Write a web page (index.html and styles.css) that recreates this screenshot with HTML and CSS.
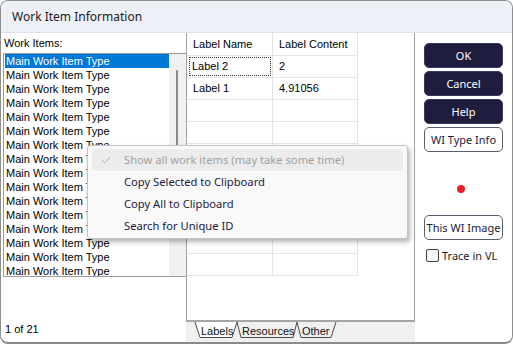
FILE: index.html
```html
<!DOCTYPE html>
<html lang="en">
<head>
    <meta charset="UTF-8">
    <title>Work Item Information</title>
    <link rel="stylesheet" href="styles.css">
</head>
<body>
    <div class="window">
        <div class="titlebar">Work Item Information</div>
        <div class="content">
            <div class="left-panel">
                <div class="list-label">Work Items:</div>
                <div class="listbox">
                    <div class="list-items" id="listItems"></div>
                    <div class="scrollbar"><div class="thumb"></div></div>
                </div>
                <div class="count">1 of 21</div>
            </div>

            <div class="middle-panel">
                <div class="grid-panel">
                    <div class="grid" id="grid">
                        <div class="cell head">Label Name</div>
                        <div class="cell head">Label Content</div>
                        <div class="cell"><span class="focus">Label 2</span></div>
                        <div class="cell">2</div>
                        <div class="cell">Label 1</div>
                        <div class="cell">4.91056</div>
                    </div>
                </div>
                <div class="tab-strip">
                    <svg width="228" height="22" viewBox="0 0 228 22">
                        <path d="M51 0 Q53 8 55 15.5 L107 15.5 L111 0" fill="#f0f0f0" stroke="#4a4a4a" stroke-width="1"/>
                        <path d="M111 0 Q113 8 115 15.5 L145 15.5 L150 0" fill="#f0f0f0" stroke="#4a4a4a" stroke-width="1"/>
                        <path d="M9 0 L14 15.5 L46 15.5 L51 0" fill="#ffffff" stroke="#4a4a4a" stroke-width="1"/>
                        <text x="15" y="13" class="tab-text">Labels</text>
                        <text x="56" y="13" class="tab-text">Resources</text>
                        <text x="116" y="13" class="tab-text">Other</text>
                    </svg>
                </div>
            </div>

            <div class="right-panel">
                <button class="btn dark">OK</button>
                <button class="btn dark">Cancel</button>
                <button class="btn dark">Help</button>
                <button class="btn light">WI Type Info</button>
                <div class="status-dot"></div>
                <button class="btn light image-btn">This WI Image</button>
                <label class="check-row"><span class="checkbox"></span>Trace in VL</label>
            </div>
        </div>

        <div class="context-menu">
            <div class="menu-item disabled hover">
                <svg class="check" width="10" height="8" viewBox="0 0 10 8"><path d="M1 4 L3.8 6.8 L9 1" fill="none" stroke="#b4b4b4" stroke-width="1"/></svg>
                Show all work items (may take some time)
            </div>
            <div class="menu-item">Copy Selected to Clipboard</div>
            <div class="menu-item">Copy All to Clipboard</div>
            <div class="menu-item">Search for Unique ID</div>
        </div>
    </div>

    <script>
        const listItems = document.getElementById('listItems');
        for (let i = 0; i < 16; i++) {
            const item = document.createElement('div');
            item.className = 'list-item' + (i === 0 ? ' selected' : '');
            item.textContent = 'Main Work Item Type';
            listItems.appendChild(item);
        }

        // empty rows to fill the label grid
        const grid = document.getElementById('grid');
        for (let i = 0; i < 16; i++) {
            const cell = document.createElement('div');
            cell.className = 'cell';
            grid.appendChild(cell);
        }
    </script>
</body>
</html>
```

FILE: styles.css
```css
body {
    margin: 0;
    background: #ffffff;
    font-family: "Liberation Sans", Arial, sans-serif;
}

.window {
    position: relative;
    width: 513px;
    height: 344px;
    box-sizing: border-box;
    border: 1px solid #8e8e8e;
    border-bottom: 2px solid #8a8a8a;
    border-radius: 8px;
    overflow: hidden;
    background: #ffffff;
    display: flex;
    flex-direction: column;
}

.titlebar {
    height: 31px;
    flex: none;
    display: flex;
    align-items: center;
    padding-left: 11px;
    background: #eef0f8;
    border-bottom: 1px solid #dfe1e8;
    font-family: "Noto Sans", sans-serif;
    font-size: 12px;
    color: #1a1a1a;
}

.content {
    flex: 1;
    display: flex;
    min-height: 0;
}

/* left: work item list */
.left-panel {
    width: 185px;
    flex: none;
    display: flex;
    flex-direction: column;
    font-size: 11px;
    color: #000000;
}

.list-label {
    height: 20px;
    line-height: 21px;
    padding-left: 3px;
}

.listbox {
    margin-left: 2px;
    height: 222px;
    border: 1px solid #9c9c9c;
    border-right: none;
    display: flex;
    overflow: hidden;
}

.list-items {
    flex: 1;
    padding-left: 1px;
}

.list-item {
    height: 14px;
    line-height: 14px;
    padding-left: 1px;
    white-space: nowrap;
}

.list-item.selected {
    background: #0078d7;
    color: #ffffff;
}

.scrollbar {
    width: 17px;
    flex: none;
    background: #f0f0f0;
    position: relative;
}

.thumb {
    position: absolute;
    left: 7px;
    top: 16px;
    width: 2px;
    height: 90px;
    border-radius: 1px;
    background: #8a8a8a;
}

.count {
    margin-top: auto;
    padding: 0 0 7px 4px;
}

/* middle: labels grid */
.middle-panel {
    width: 229px;
    flex: none;
    display: flex;
    flex-direction: column;
}

.grid-panel {
    flex: 1;
    border-left: 1px solid #a0a0a0;
    border-right: 1px solid #a0a0a0;
    border-bottom: 2px solid #a6a6a6;
    background: #ffffff;
}

.grid {
    display: grid;
    grid-template-columns: 86px 85px;
    grid-template-rows: 23px;
    grid-auto-rows: 22px;
    font-size: 11px;
    color: #000000;
}

.cell {
    box-sizing: border-box;
    border-right: 1px solid #e4e4e4;
    border-bottom: 1px solid #e4e4e4;
    padding-left: 6px;
    line-height: 21px;
    white-space: nowrap;
}

.cell.head {
    line-height: 22px;
}

.focus {
    display: inline-block;
    margin: 2px 0 0 -3px;
    padding-left: 2px;
    width: 78px;
    height: 17px;
    line-height: 17px;
    outline: 1px dotted #3a3a3a;
    vertical-align: top;
}

.tab-strip {
    height: 20px;
    background: #f0f0f0;
}

.tab-strip svg {
    display: block;
}

.tab-text {
    font-family: "Liberation Sans", Arial, sans-serif;
    font-size: 11px;
    fill: #111111;
}

/* right: buttons */
.right-panel {
    flex: 1;
    display: flex;
    flex-direction: column;
    align-items: flex-start;
    padding: 10px 0 0 9px;
    font-family: "Noto Sans", sans-serif;
    font-size: 11px;
}

.btn {
    width: 79px;
    height: 25px;
    margin-bottom: 3px;
    border-radius: 5px;
    font-family: "Noto Sans", sans-serif;
    font-size: 11px;
    padding: 0;
}

.btn.dark {
    background: #1e1d3e;
    border: 1px solid #3a3960;
    color: #ffffff;
}

.btn.light {
    background: #ffffff;
    border: 1.5px solid #5e5e6e;
    color: #1b1b3a;
}

.status-dot {
    width: 8px;
    height: 8px;
    border-radius: 50%;
    background: #e5222b;
    margin: 30px 0 0 33px;
}

.image-btn {
    margin-top: 22px;
}

.check-row {
    display: flex;
    align-items: center;
    gap: 3px;
    margin: 5px 0 0 2px;
    color: #1a1a1a;
}

.checkbox {
    width: 11px;
    height: 11px;
    border: 1px solid #404040;
    border-radius: 2px;
    background: #f6f6f6;
}

/* popup menu over the list */
.context-menu {
    position: absolute;
    left: 86px;
    top: 144px;
    width: 319px;
    padding: 3px 0 1px;
    background: #f9f9f9;
    border: 1px solid #c4c4c4;
    border-radius: 3px;
    box-shadow: 2px 3px 5px rgba(0, 0, 0, 0.3);
    font-family: "Noto Sans", sans-serif;
    font-size: 11.2px;
    color: #1c1a3a;
}

.menu-item {
    position: relative;
    height: 22px;
    line-height: 21px;
    margin: 0 4px;
    padding-left: 32px;
    border-radius: 4px;
}

.menu-item.hover {
    background: #ececec;
}

.menu-item.disabled {
    color: #a0a0a0;
}

.check {
    position: absolute;
    left: 9px;
    top: 7px;
}
```
